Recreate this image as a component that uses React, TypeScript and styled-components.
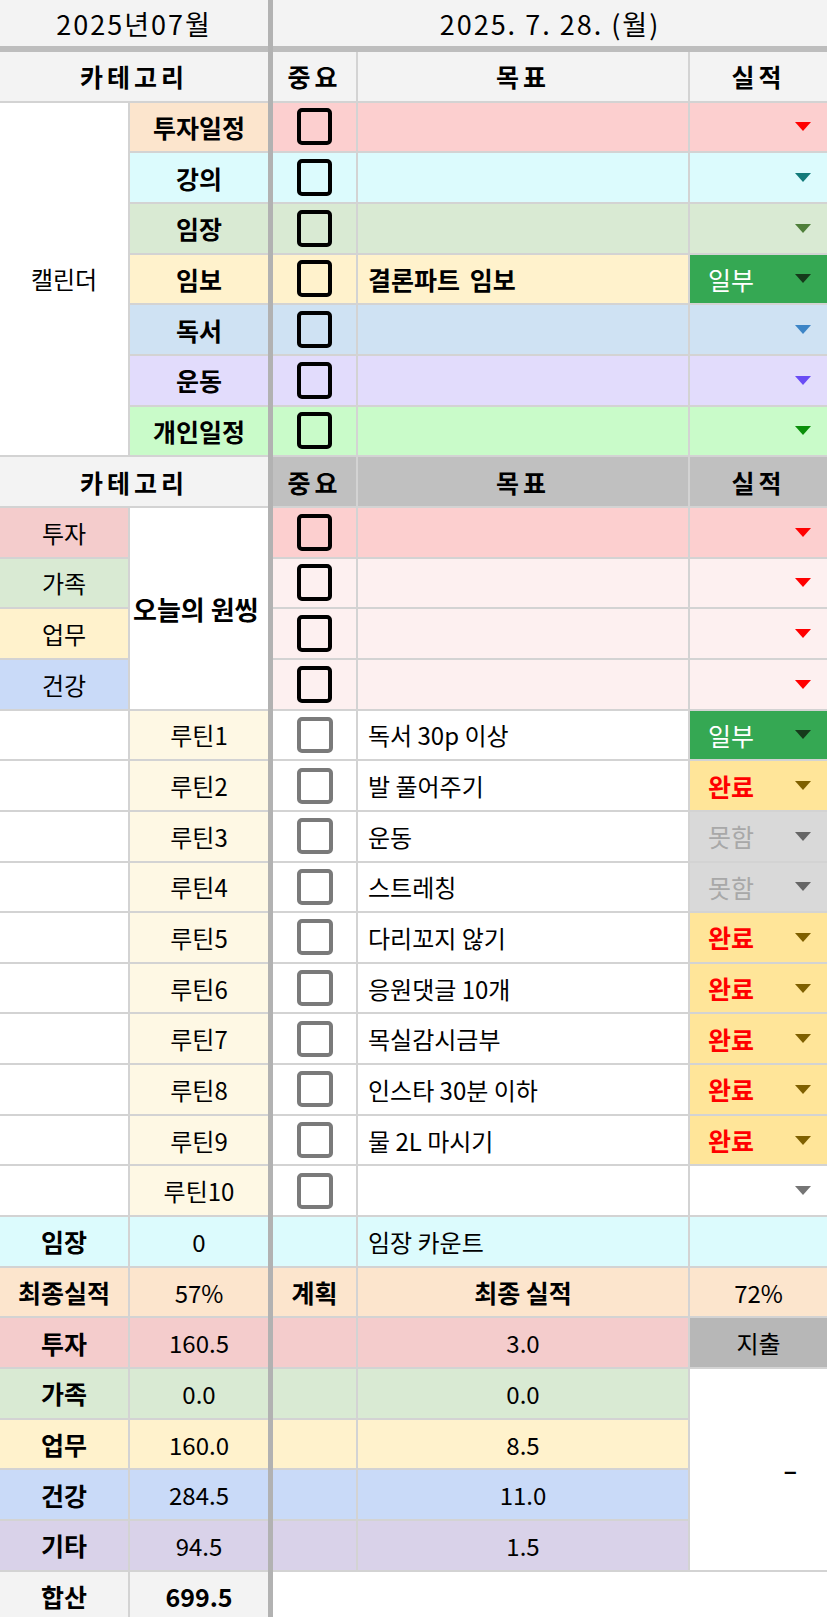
import React from "react";
import styled, { createGlobalStyle } from "styled-components";

const GlobalStyle = createGlobalStyle`
  html, body {
    margin: 0;
    padding: 0;
    background: #ffffff;
    overflow: hidden;
  }
  body {
    font-family: "Noto Sans CJK KR", "Noto Sans", sans-serif;
  }
`;

const LINE = "#d3d3d3";

const Sheet = styled.div`
  display: grid;
  width: 827px;
  height: 1617px;
  overflow: hidden;
  grid-template-columns: 130px 138px 5px 85px 332px 137px;
  grid-template-rows: 46px 6px repeat(31, 50.67px);
  color: #000;
  font-family: "Noto Sans CJK KR", "Noto Sans", sans-serif;
`;

const FrozenCol = styled.div`
  grid-column: 3;
  grid-row: 1 / -1;
  background: #b2b2b2;
  z-index: 2;
`;

const FrozenRow = styled.div`
  grid-column: 1 / -1;
  grid-row: 2;
  background: #bdbdbd;
`;

const TopCell = styled.div<{ $span: number }>`
  grid-column: span ${(p) => p.$span};
  background: #f3f3f3;
  display: flex;
  align-items: center;
  justify-content: center;
  font-size: 27px;
  letter-spacing: 2px;
`;

interface CellProps {
  $bg?: string;
  $span?: number;
  $rows?: number;
  $align?: "left" | "center" | "right";
  $bold?: boolean;
  $edge?: boolean;
  $color?: string;
  $spaced?: boolean;
  $flat?: boolean;
}

const Cell = styled.div<CellProps>`
  grid-column: span ${(p) => p.$span ?? 1};
  grid-row: span ${(p) => p.$rows ?? 1};
  box-sizing: border-box;
  min-width: 0;
  background: ${(p) => p.$bg ?? "#ffffff"};
  border-bottom: ${(p) => (p.$flat ? "none" : `2px solid ${LINE}`)};
  border-right: ${(p) => (p.$edge || p.$flat ? "none" : `2px solid ${LINE}`)};
  display: flex;
  align-items: center;
  justify-content: ${(p) =>
    p.$align === "left" ? "flex-start" : p.$align === "right" ? "flex-end" : "center"};
  padding: ${(p) => (p.$align === "left" ? "0 0 0 10px" : p.$align === "right" ? "0 30px 0 0" : "0")};
  font-size: ${(p) => (p.$bold ? "25px" : "24px")};
  font-weight: ${(p) => (p.$bold ? 700 : 400)};
  letter-spacing: ${(p) => (p.$spaced ? "4px" : "0")};
  color: ${(p) => p.$color ?? "#000"};
  white-space: nowrap;
  overflow: hidden;
`;

const OneThing = styled(Cell)`
  padding-left: 3px;
  font-size: 26px;
`;

const Goal = styled(Cell)`
  word-spacing: 4px;
`;

const Box = styled.span<{ $dark?: boolean }>`
  display: block;
  box-sizing: border-box;
  width: ${(p) => (p.$dark ? "35px" : "36px")};
  height: ${(p) => (p.$dark ? "37px" : "36px")};
  border: 4px solid ${(p) => (p.$dark ? "#000" : "#7a7a7a")};
  border-radius: 5px;
  background: ${(p) => (p.$dark ? "transparent" : "#fff")};
`;

const StatusCell = styled.div<{ $bg: string }>`
  box-sizing: border-box;
  min-width: 0;
  background: ${(p) => p.$bg};
  border-bottom: 2px solid ${LINE};
  display: flex;
  align-items: center;
  justify-content: space-between;
  padding: 0 16px 0 18px;
`;

const StatusText = styled.span<{ $color: string; $bold?: boolean }>`
  font-size: 25px;
  font-weight: ${(p) => (p.$bold ? 700 : 400)};
  color: ${(p) => p.$color};
`;

const Caret = styled.span<{ $color: string }>`
  width: 0;
  height: 0;
  margin-left: auto;
  border-left: 8px solid transparent;
  border-right: 8px solid transparent;
  border-top: 9px solid ${(p) => p.$color};
`;

type Status = "일부" | "완료" | "못함" | "";

const statusLook: Record<string, { bg: string; text: string; caret: string; bold: boolean }> = {
  일부: { bg: "#35a853", text: "#ffffff", caret: "#163a1b", bold: false },
  완료: { bg: "#ffe599", text: "#ff0000", caret: "#7f6000", bold: true },
  못함: { bg: "#d9d9d9", text: "#a8a8a8", caret: "#666666", bold: false },
};

const Status: React.FC<{ value: Status; bg?: string; caret?: string }> = ({ value, bg, caret }) => {
  const look = value ? statusLook[value] : null;
  return (
    <StatusCell $bg={look ? look.bg : bg ?? "#fff"}>
      {look && (
        <StatusText $color={look.text} $bold={look.bold}>
          {value}
        </StatusText>
      )}
      <Caret $color={look ? look.caret : caret ?? "#757575"} />
    </StatusCell>
  );
};

const calendar = [
  { label: "투자일정", labelBg: "#fce5cd", bg: "#fccfcf", caret: "#ff0000" },
  { label: "강의", labelBg: "#dcfbfd", bg: "#dcfbfd", caret: "#137a7a" },
  { label: "임장", labelBg: "#d9ead3", bg: "#d9ead3", caret: "#4f7f3a" },
  { label: "임보", labelBg: "#fff2cc", bg: "#fff2cc", goal: "결론파트 임보", status: "일부" as Status },
  { label: "독서", labelBg: "#cfe2f3", bg: "#cfe2f3", caret: "#3d85c6" },
  { label: "운동", labelBg: "#e2dcfc", bg: "#e2dcfc", caret: "#6a4cf5" },
  { label: "개인일정", labelBg: "#c9fbc9", bg: "#c9fbc9", caret: "#0a8f0a" },
];

const wants = [
  { label: "투자", bg: "#f4cccc", row: "#fccfcf" },
  { label: "가족", bg: "#d9ead3", row: "#fdf0f0" },
  { label: "업무", bg: "#fff2cc", row: "#fdf0f0" },
  { label: "건강", bg: "#c9daf8", row: "#fdf0f0" },
];

const routines: { goal: string; status: Status }[] = [
  { goal: "독서 30p 이상", status: "일부" },
  { goal: "발 풀어주기", status: "완료" },
  { goal: "운동", status: "못함" },
  { goal: "스트레칭", status: "못함" },
  { goal: "다리꼬지 않기", status: "완료" },
  { goal: "응원댓글 10개", status: "완료" },
  { goal: "목실감시금부", status: "완료" },
  { goal: "인스타 30분 이하", status: "완료" },
  { goal: "물 2L 마시기", status: "완료" },
  { goal: "", status: "" },
];

const totals = [
  { label: "투자", bg: "#f4cccc", plan: "160.5", done: "3.0" },
  { label: "가족", bg: "#d9ead3", plan: "0.0", done: "0.0" },
  { label: "업무", bg: "#fff2cc", plan: "160.0", done: "8.5" },
  { label: "건강", bg: "#c9daf8", plan: "284.5", done: "11.0" },
  { label: "기타", bg: "#d9d2e9", plan: "94.5", done: "1.5" },
];

const HEAD = "#f3f3f3";

const App: React.FC = () => {
  return (
    <>
      <GlobalStyle />
      <Sheet>
        <FrozenCol />
        <FrozenRow />

        <TopCell $span={2}>2025년07월</TopCell>
        <TopCell $span={3}>2025. 7. 28. (월)</TopCell>

        <Cell $span={2} $bg={HEAD} $bold $spaced $edge>카테고리</Cell>
        <Cell $bg={HEAD} $bold $spaced>중요</Cell>
        <Cell $bg={HEAD} $bold $spaced>목표</Cell>
        <Cell $bg={HEAD} $bold $spaced $edge>실적</Cell>

        <Cell $rows={7}>캘린더</Cell>
        {calendar.map((c) => (
          <React.Fragment key={c.label}>
            <Cell $bg={c.labelBg} $bold $edge>{c.label}</Cell>
            <Cell $bg={c.bg}><Box $dark /></Cell>
            <Goal $bg={c.bg} $bold $align="left">{c.goal ?? ""}</Goal>
            <Status value={c.status ?? ""} bg={c.bg} caret={c.caret} />
          </React.Fragment>
        ))}

        <Cell $span={2} $bg={HEAD} $bold $spaced $edge>카테고리</Cell>
        <Cell $bg="#c0c0c0" $bold $spaced>중요</Cell>
        <Cell $bg="#c0c0c0" $bold $spaced>목표</Cell>
        <Cell $bg="#c0c0c0" $bold $spaced $edge>실적</Cell>

        {wants.map((w, i) => (
          <React.Fragment key={w.label}>
            <Cell $bg={w.bg}>{w.label}</Cell>
            {i === 0 && (
              <OneThing $rows={4} $bold $edge $align="left">오늘의 원씽</OneThing>
            )}
            <Cell $bg={w.row}><Box $dark /></Cell>
            <Cell $bg={w.row} />
            <Status value="" bg={w.row} caret="#ff0000" />
          </React.Fragment>
        ))}

        {routines.map((r, i) => (
          <React.Fragment key={i}>
            <Cell />
            <Cell $bg="#fef8e4" $edge>루틴{i + 1}</Cell>
            <Cell><Box /></Cell>
            <Cell $align="left">{r.goal}</Cell>
            <Status value={r.status} />
          </React.Fragment>
        ))}

        <Cell $bg="#dcfbfd" $bold>임장</Cell>
        <Cell $bg="#dcfbfd" $edge>0</Cell>
        <Cell $bg="#dcfbfd" />
        <Cell $bg="#dcfbfd" $align="left">임장 카운트</Cell>
        <Cell $bg="#dcfbfd" $edge />

        <Cell $bg="#fce5cd" $bold>최종실적</Cell>
        <Cell $bg="#fce5cd" $edge>57%</Cell>
        <Cell $bg="#fce5cd" $bold>계획</Cell>
        <Cell $bg="#fce5cd" $bold>최종 실적</Cell>
        <Cell $bg="#fce5cd" $edge>72%</Cell>

        {totals.map((t, i) => (
          <React.Fragment key={t.label}>
            <Cell $bg={t.bg} $bold>{t.label}</Cell>
            <Cell $bg={t.bg} $edge>{t.plan}</Cell>
            <Cell $bg={t.bg} />
            <Cell $bg={t.bg}>{t.done}</Cell>
            {i === 0 && <Cell $bg="#b7b7b7" $edge>지출</Cell>}
            {i === 1 && <Cell $rows={4} $edge $bold $align="right">–</Cell>}
          </React.Fragment>
        ))}

        <Cell $bg={HEAD} $bold>합산</Cell>
        <Cell $bg={HEAD} $bold $edge>699.5</Cell>
        <Cell $span={3} $flat />
      </Sheet>
    </>
  );
};

export default App;
